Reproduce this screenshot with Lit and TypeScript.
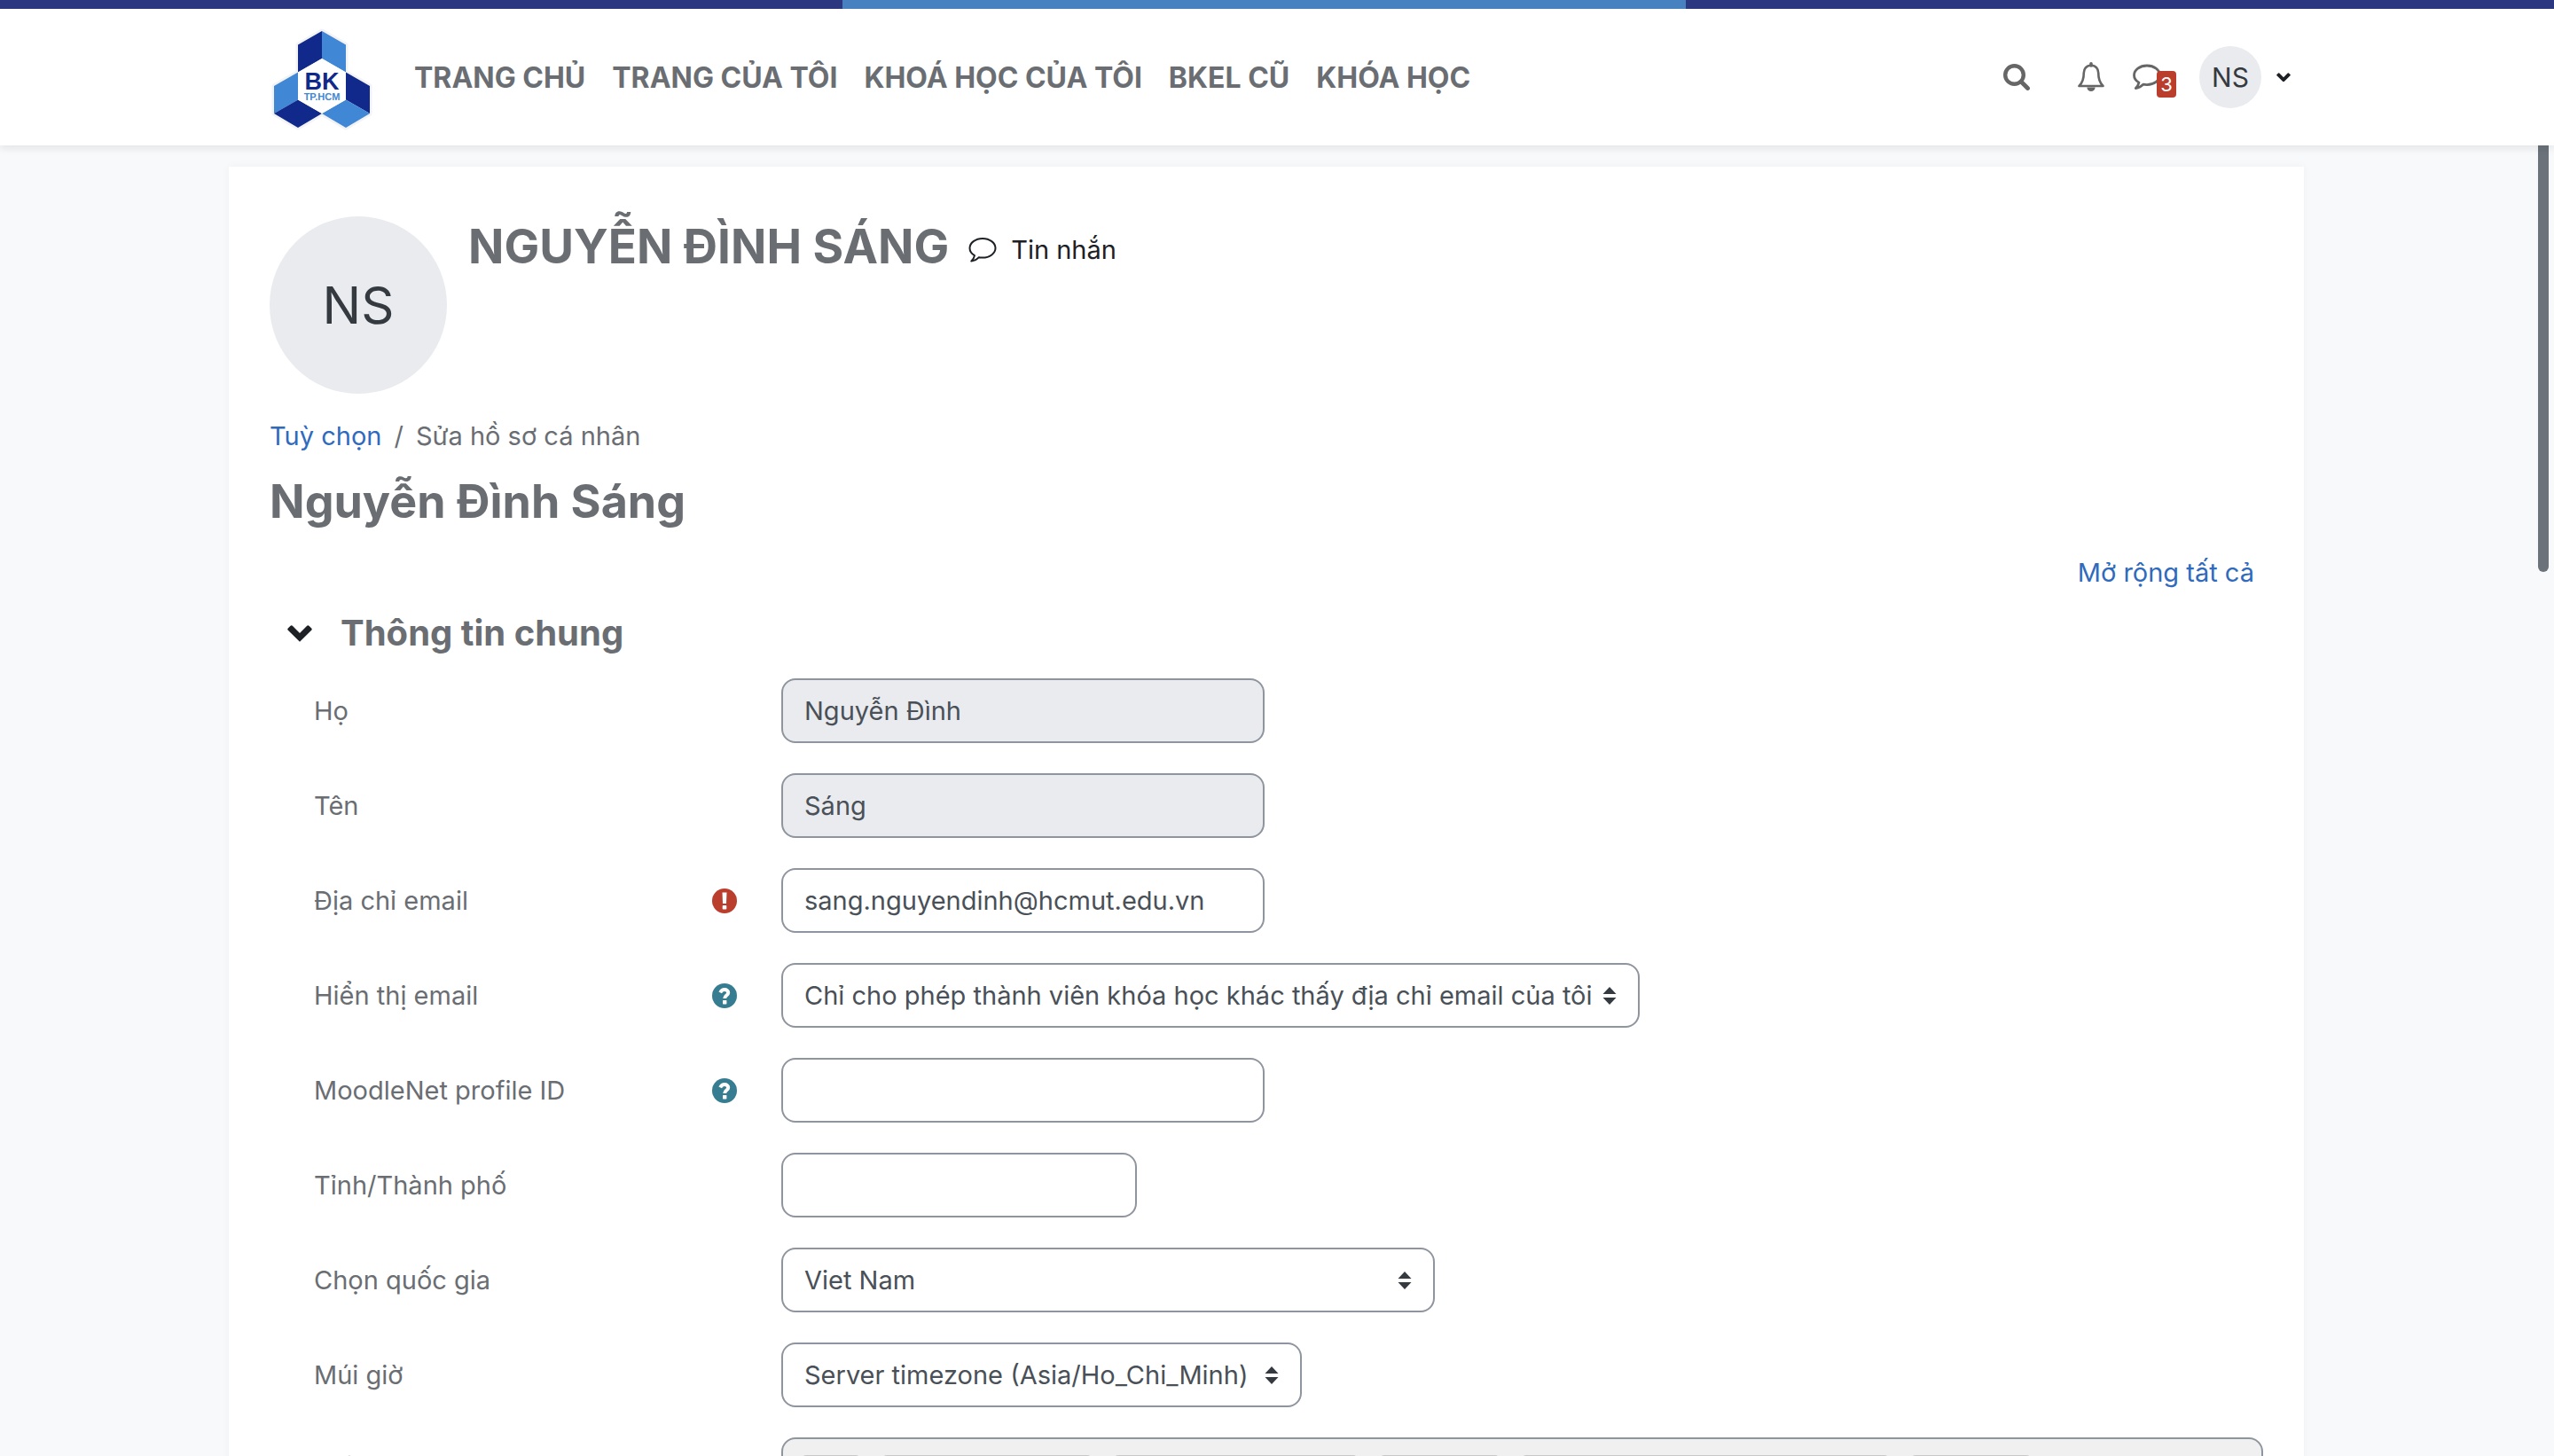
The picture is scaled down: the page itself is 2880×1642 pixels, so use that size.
import { LitElement, html, svg, css, nothing } from "lit";
import { customElement } from "lit/decorators.js";
import { classMap } from "lit/directives/class-map.js";

type Field = {
  id: string;
  label: string;
  kind: "text" | "email" | "select";
  size: "medium" | "small" | "wide" | "country" | "zone";
  value?: string;
  disabled?: boolean;
  hint?: "required" | "help";
};

const NAV = ["TRANG CHỦ", "TRANG CỦA TÔI", "KHOÁ HỌC CỦA TÔI", "BKEL CŨ", "KHÓA HỌC"];

const FIELDS: Field[] = [
  { id: "lastname", label: "Họ", kind: "text", size: "medium", value: "Nguyễn Đình", disabled: true },
  { id: "firstname", label: "Tên", kind: "text", size: "medium", value: "Sáng", disabled: true },
  { id: "email", label: "Địa chỉ email", kind: "email", size: "medium", value: "sang.nguyendinh@hcmut.edu.vn", hint: "required" },
  { id: "maildisplay", label: "Hiển thị email", kind: "select", size: "wide", value: "Chỉ cho phép thành viên khóa học khác thấy địa chỉ email của tôi", hint: "help" },
  { id: "moodlenet", label: "MoodleNet profile ID", kind: "text", size: "medium", hint: "help" },
  { id: "city", label: "Tỉnh/Thành phố", kind: "text", size: "small" },
  { id: "country", label: "Chọn quốc gia", kind: "select", size: "country", value: "Viet Nam" },
  { id: "timezone", label: "Múi giờ", kind: "select", size: "zone", value: "Server timezone (Asia/Ho_Chi_Minh)" },
];

const TOOL_GROUPS = [64, 234, 273, 133, 412, 133];

const chevron = (w: number) => html`<svg class="chevron" width=${w} viewBox="0 0 28 19" aria-hidden="true">
  <path d="M.8 5.800a1.600 1.600 0 0 1 0-2.200L3.600.8a1.600 1.600 0 0 1 2.200 0L14 9 22.200.8a1.600 1.600 0 0 1 2.200 0l2.800 2.800a1.600 1.600 0 0 1 0 2.200L14 18.800z" fill="currentColor" />
</svg>`;

const bubble = (strokeWidth: number) => html`<svg width="32" height="30" viewBox="0 0 32 30" aria-hidden="true">
  <path
    d="M16 2C8 2 1.500 6.800 1.500 12.800c0 3.400 2.100 6.400 5.500 8.300-.5 2.500-1.700 4.500-3.700 6.400 3.700-.4 6.500-2 8.500-4.300 1.300.3 2.700.4 4.200.4 8 0 14.500-4.800 14.500-10.800S24 2 16 2z"
    fill="none" stroke="currentColor" stroke-width=${strokeWidth} stroke-linejoin="round" />
</svg>`;

const logo = html`<svg width="116" height="120" viewBox="-58 -4 116 120" role="img" aria-label="BK TP.HCM">
  <path d="M0 0 27 15.500V46.500L54 62V93L27 109 0 93-27 109-54 93V62L-27 46.500V15.500z" fill="none" stroke="#f3f3f6" stroke-width="5" stroke-linejoin="round" />
  ${svg`
    <path d="M0 0V31L-27 46.500V15.500z" fill="#10298a" />
    <path d="M0 0V31L27 46.500V15.500z" fill="#4087d5" />
    <path d="M-27 46.500V77.500L-54 93V62z" fill="#4087d5" />
    <path d="M-54 93-27 77.500 0 93-27 109z" fill="#10298a" />
    <path d="M27 46.500V77.500L54 93V62z" fill="#10298a" />
    <path d="M54 93 27 77.500 0 93 27 109z" fill="#4087d5" />
    <path d="M0 31 27 46.500V77.500L0 93-27 77.500V46.500z" fill="#fff" />
    <text class="logo-bk" x="0" y="66" text-anchor="middle">BK</text>
    <text class="logo-city" x="0" y="78" text-anchor="middle">TP.HCM</text>
  `}
</svg>`;

@customElement("app-header")
class AppHeader extends LitElement {
  static styles = css`
    :host {
      display: block;
      position: relative;
      z-index: 2;
      background: #fff;
      box-shadow: 0 4px 8px rgba(0, 0, 0, 0.08);
      color: #6a6e73;
    }
    .stripe {
      height: 10px;
      background: linear-gradient(90deg, #2b387f 33%, #4881c0 33%, #4881c0 66%, #2b387f 66%);
    }
    .gutter { padding-right: 24px; }
    .bar {
      box-sizing: border-box;
      max-width: 2340px;
      height: 154px;
      margin: 0 auto;
      padding: 0 15px 0 47px;
      display: flex;
      align-items: flex-start;
    }
    .brand { display: flex; padding-top: 21px; }
    .logo-bk { font: 700 27px "Liberation Sans", sans-serif; fill: #10298a; }
    .logo-city { font: 700 11px "Liberation Sans", sans-serif; fill: #4087d5; }
    nav { display: flex; gap: 30px; margin-left: 46px; padding-top: 55px; }
    nav a { font-size: 32px; line-height: 46px; font-weight: 700; color: inherit; text-decoration: none; white-space: nowrap; }
    .tools { margin-left: auto; display: flex; align-items: center; height: 70px; padding-top: 42px; }
    button {
      display: flex;
      align-items: center;
      padding: 0;
      border: 0;
      background: none;
      font: inherit;
      color: #666;
      position: relative;
    }
    .search { margin-right: 54px; }
    .bell { margin-right: 32px; }
    .messages { margin-right: 43px; }
    .badge {
      position: absolute;
      left: 27px;
      top: 8px;
      width: 22px;
      line-height: 30px;
      border-radius: 4px;
      background: #bb3d2c;
      color: #fff;
      font-size: 22px;
      text-align: center;
    }
    .user { gap: 17px; color: #1d2125; }
    .avatar {
      width: 70px;
      line-height: 70px;
      border-radius: 50%;
      background: #e9ebef;
      color: #343a40;
      font-size: 30px;
      text-align: center;
    }
  `;

  render() {
    return html`
      <div class="stripe"></div>
      <div class="gutter">
        <div class="bar">
          <a class="brand" href="#">${logo}</a>
          <nav>${NAV.map((item) => html`<a href="#">${item}</a>`)}</nav>
          <div class="tools">
            <button class="search" aria-label="Tìm kiếm">
              <svg width="30" height="30" viewBox="0 0 30 30" aria-hidden="true">
                <circle cx="12.500" cy="12.500" r="10.300" fill="none" stroke="currentColor" stroke-width="4.400" />
                <path d="M20 20 27.500 27.500" stroke="currentColor" stroke-width="4.800" stroke-linecap="round" />
              </svg>
            </button>
            <button class="bell" aria-label="Thông báo">
              <svg width="30" height="34" viewBox="0 0 30 34" aria-hidden="true">
                <path d="M15 3.800C9.500 3.800 6.800 8 6.800 12c0 7-1.500 11.500-5.300 15h27c-3.800-3.500-5.300-8-5.300-15 0-4-2.700-8.200-8.200-8.200z" fill="none" stroke="currentColor" stroke-width="2.600" stroke-linejoin="round" />
                <path d="M15 1.800V4" stroke="currentColor" stroke-width="3.600" stroke-linecap="round" />
                <path d="M10.400 28.500h9.200a4.600 4.600 0 0 1-9.200 0z" fill="currentColor" />
              </svg>
            </button>
            <button class="messages" aria-label="Tin nhắn">${bubble(2.8)}<span class="badge">3</span></button>
            <button class="user" aria-label="Tài khoản"><span class="avatar">NS</span>${chevron(16)}</button>
          </div>
        </div>
      </div>
    `;
  }
}

@customElement("profile-form")
class ProfileForm extends LitElement {
  static styles = css`
    :host { display: block; }
    form { display: flex; flex-direction: column; gap: 34px; padding-left: 50px; }
    .row { display: grid; grid-template-columns: 527px 1fr; align-items: start; }
    .caption {
      display: flex;
      align-items: center;
      justify-content: space-between;
      height: 73px;
      padding-right: 50px;
      color: #6a6e73;
    }
    .hint { display: flex; padding: 0; border: 0; background: none; }
    .control { display: grid; max-width: 100%; }
    .control > * { grid-area: 1 / 1; }
    .medium { width: 545px; }
    .small { width: 401px; }
    .wide { width: 968px; }
    .country { width: 737px; }
    .zone { width: 587px; }
    input, select {
      box-sizing: border-box;
      width: 100%;
      height: 73px;
      margin: 0;
      padding: 0 24px;
      border: 2px solid #8f959e;
      border-radius: 16px;
      background: #fff;
      color: #495057;
      font: inherit;
      appearance: none;
      opacity: 1;
    }
    input:disabled { background: #e9ebef; }
    .arrows { justify-self: end; align-self: center; margin-right: 26px; pointer-events: none; }
    .editor {
      display: flex;
      align-items: flex-start;
      gap: 27px;
      min-height: 400px;
      padding: 18px 22px;
      border: 2px solid #8f959e;
      border-radius: 16px;
      background: #f0f0f0;
    }
    .group { box-sizing: border-box; height: 64px; border: 2px solid #c8c8c8; border-radius: 4px; }
  `;

  private hint(kind: Field["hint"]) {
    if (kind === "required") {
      return html`<svg width="28" height="28" viewBox="0 0 28 28" role="img" aria-label="Bắt buộc">
        <circle cx="14" cy="14" r="14" fill="#bb3d2c" />
        <path d="M11.500 4.500h5l-.5 12.500h-4z" fill="#fff" />
        <rect x="11.700" y="19" width="4.600" height="4.600" rx="0.800" fill="#fff" />
      </svg>`;
    }
    if (kind === "help") {
      return html`<button class="hint" type="button" aria-label="Trợ giúp">
        <svg width="28" height="28" viewBox="0 0 28 28" aria-hidden="true">
          <circle cx="14" cy="14" r="14" fill="#367d91" />
          <path d="M9.200 10.400C10.300 8.300 11.700 7 14 7c2.300 0 4.200 1.400 4.200 3.500 0 3-4 3.200-4 6.500" fill="none" stroke="#fff" stroke-width="4" />
          <rect x="12" y="19" width="4.400" height="4.400" rx="0.600" fill="#fff" />
        </svg>
      </button>`;
    }
    return nothing;
  }

  private control(f: Field) {
    if (f.kind === "select") {
      return html`
        <select id=${f.id}><option>${f.value}</option></select>
        <svg class="arrows" width="16" height="20" viewBox="0 0 16 20" aria-hidden="true">
          <path d="M8 0 15.500 8H.5zM8 20 .5 12h15z" fill="#343a40" />
        </svg>
      `;
    }
    return html`<input id=${f.id} type=${f.kind} .value=${f.value ?? ""} ?disabled=${!!f.disabled} />`;
  }

  render() {
    return html`
      <form>
        ${FIELDS.map(
          (f) => html`
            <div class="row">
              <div class="caption"><label for=${f.id}>${f.label}</label>${this.hint(f.hint)}</div>
              <div class=${classMap({ control: true, [f.size]: true })}>${this.control(f)}</div>
            </div>
          `
        )}
        <div class="row">
          <div class="caption"><span id="description">Diễn tả</span></div>
          <div class="editor" role="group" aria-labelledby="description">
            ${TOOL_GROUPS.map((w) => html`<div class="group" style="width:${w}px"></div>`)}
          </div>
        </div>
      </form>
    `;
  }
}

@customElement("app-root")
class AppRoot extends LitElement {
  static styles = css`
    :host {
      display: block;
      position: relative;
      height: 100vh;
      overflow: hidden;
      background: #f8f9fb;
      color: #6a6e73;
      font-family: Inter, "Noto Sans", sans-serif;
      font-size: 29px;
      line-height: 44px;
    }
    a { color: #2f6abd; text-decoration: none; }
    .gutter { padding: 24px 24px 0 0; }
    .card {
      box-sizing: border-box;
      max-width: 2340px;
      margin: 0 auto;
      padding: 56px 46px;
      background: #fff;
      box-shadow: 0 0 10px rgba(0, 0, 0, 0.04);
    }
    .profile { display: flex; align-items: flex-start; }
    .avatar {
      width: 200px;
      line-height: 200px;
      border-radius: 50%;
      background: #e9ebef;
      color: #343a40;
      font-size: 58px;
      text-align: center;
    }
    h1, h2, h3 { margin: 0; font-weight: 700; }
    h1 { font-size: 53px; line-height: 64px; }
    h2 { margin-top: 20px; font-size: 52px; line-height: 64px; }
    h3 { font-size: 40px; line-height: 50px; color: #6a6e73; }
    .profile h1 { margin-left: 24px; padding-top: 2px; }
    .message {
      display: flex;
      align-items: center;
      gap: 16px;
      margin-left: 22px;
      padding-top: 16px;
      color: #1d2125;
    }
    .crumbs { display: flex; gap: 14px; margin-top: 26px; }
    .expand { display: flex; justify-content: flex-end; margin-top: 26px; padding-right: 10px; }
    .section {
      display: flex;
      align-items: center;
      gap: 32px;
      margin: 21px 0 26px;
      padding: 0 0 0 20px;
      border: 0;
      background: none;
      color: #1d2125;
      font: inherit;
    }
    .thumb {
      position: absolute;
      top: 20px;
      right: 6px;
      width: 12px;
      height: 625px;
      border-radius: 6px;
      background: #6b727a;
    }
  `;

  render() {
    return html`
      <app-header></app-header>
      <div class="gutter">
        <main class="card">
          <div class="profile">
            <div class="avatar">NS</div>
            <h1>NGUYỄN ĐÌNH SÁNG</h1>
            <a class="message" href="#">${bubble(2)}<span>Tin nhắn</span></a>
          </div>
          <div class="crumbs"><a href="#">Tuỳ chọn</a><span>/</span><span>Sửa hồ sơ cá nhân</span></div>
          <h2>Nguyễn Đình Sáng</h2>
          <div class="expand"><a href="#">Mở rộng tất cả</a></div>
          <button class="section" aria-expanded="true">${chevron(28)}<h3>Thông tin chung</h3></button>
          <profile-form></profile-form>
        </main>
      </div>
      <div class="thumb"></div>
    `;
  }
}
